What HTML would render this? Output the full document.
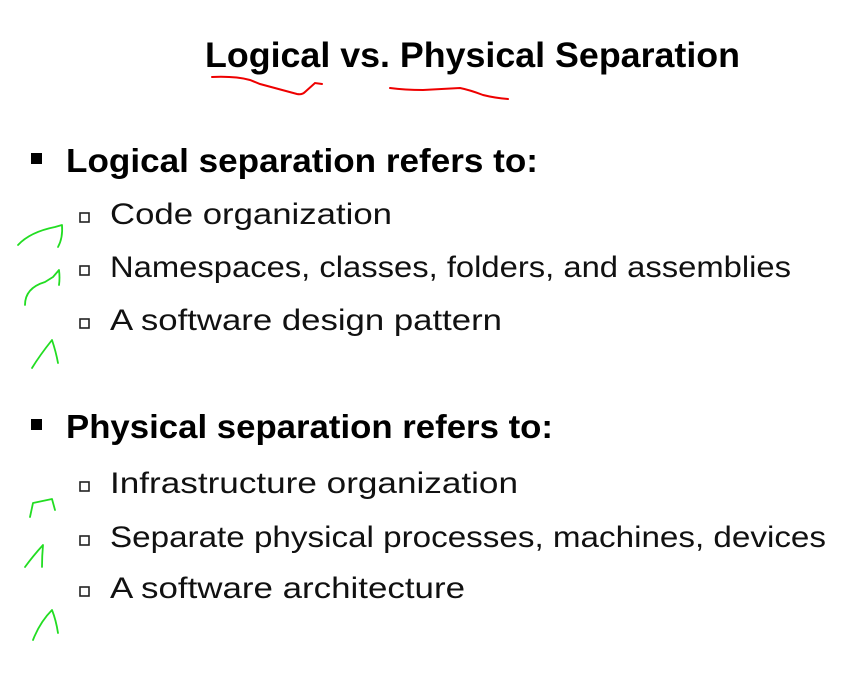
<!DOCTYPE html>
<html><head><style>
html,body{margin:0;padding:0;background:#fff;}
svg{display:block;}
</style></head><body>
<svg width="858" height="684" viewBox="0 0 858 684" xmlns="http://www.w3.org/2000/svg">
<rect width="858" height="684" fill="#fff"/>
<g font-family="Liberation Sans, sans-serif" fill="#000">
<text x="205" y="67" font-size="35" font-weight="bold" textLength="535" lengthAdjust="spacingAndGlyphs">Logical vs. Physical Separation</text>
<rect x="31" y="153" width="11" height="11"/>
<text x="66" y="172" font-size="33" font-weight="bold" textLength="472" lengthAdjust="spacingAndGlyphs">Logical separation refers to:</text>
<g font-size="30" fill="#111">
<text x="110" y="224" textLength="282" lengthAdjust="spacingAndGlyphs">Code organization</text>
<text x="110" y="277" textLength="681" lengthAdjust="spacingAndGlyphs">Namespaces, classes, folders, and assemblies</text>
<text x="110" y="330" textLength="392" lengthAdjust="spacingAndGlyphs">A software design pattern</text>
</g>
<rect x="31" y="419" width="11" height="11"/>
<text x="66" y="438" font-size="33" font-weight="bold" textLength="487" lengthAdjust="spacingAndGlyphs">Physical separation refers to:</text>
<g font-size="30" fill="#111">
<text x="110" y="493" textLength="408" lengthAdjust="spacingAndGlyphs">Infrastructure organization</text>
<text x="110" y="547" textLength="716" lengthAdjust="spacingAndGlyphs">Separate physical processes, machines, devices</text>
<text x="110" y="598" textLength="355" lengthAdjust="spacingAndGlyphs">A software architecture</text>
</g>
</g>
<g fill="none" stroke="#222" stroke-width="1.6">
<rect x="80" y="213" width="9" height="9"/>
<rect x="80" y="266" width="9" height="9"/>
<rect x="80" y="319" width="9" height="9"/>
<rect x="80" y="482" width="9" height="9"/>
<rect x="80" y="536" width="9" height="9"/>
<rect x="80" y="587" width="9" height="9"/>
</g>
<g fill="none" stroke="#e00" stroke-width="2" stroke-linecap="round">
<path d="M212 77 Q235 76 250 80 L260 84 L297 94 Q302 95 305 92 L315 83 L322 84"/>
<path d="M390 88 Q405 90 423 90 L460 88 Q470 90 483 95 Q495 98 508 99"/>
</g>
<g fill="none" stroke="#2d2" stroke-width="1.8" stroke-linecap="round" stroke-linejoin="round">
<path d="M18 245 Q30 232 55 227 L62 225 Q63 238 58 247"/>
<path d="M25 305 Q25 288 45 282 L53 277 L59 270 Q60 278 59 285"/>
<path d="M32 368 Q40 355 52 340 Q56 352 58 363"/>
<path d="M30 517 L33 503 L52 499 L55 510"/>
<path d="M25 567 Q33 556 43 545 Q42 556 42 567"/>
<path d="M33 640 Q40 622 52 610 Q56 620 58 633"/>
</g>
</svg>
</body></html>
